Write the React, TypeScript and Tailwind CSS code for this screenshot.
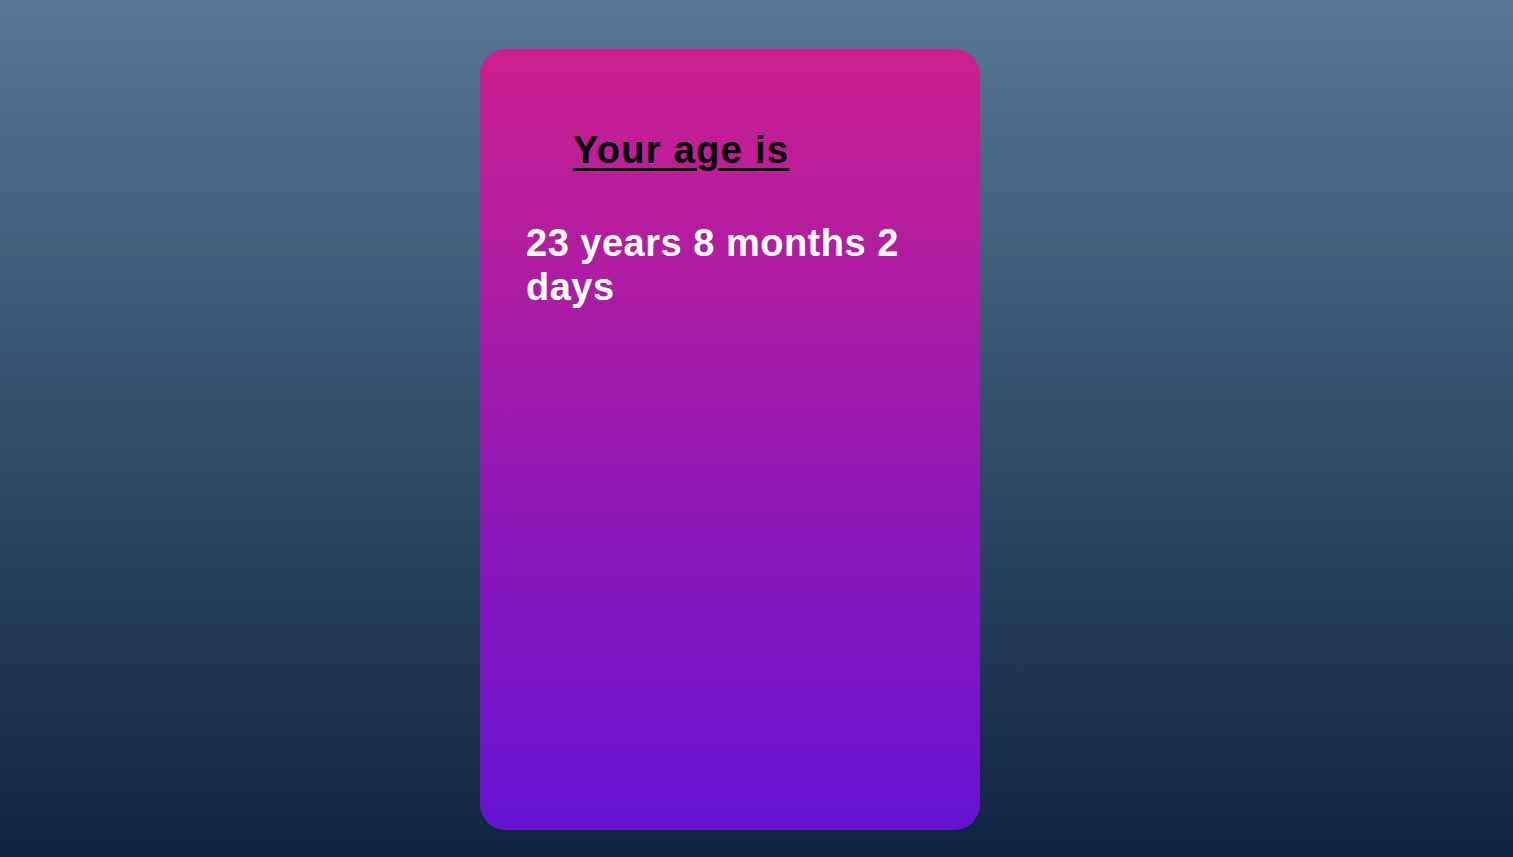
export default function App() {
  return (
    <div className="min-h-[857px] h-screen w-full bg-linear-to-b/srgb from-[#547896] to-[#0e2443] pl-[480px] pt-[49px] font-['Liberation_Sans',Arial,sans-serif]">
      <div className="w-[500px] h-[781px] rounded-[26px] bg-linear-to-b/srgb from-[#cd208e] to-[#6413d3] px-[46px] pt-[80px]">
        <h1 className="ml-[47px] text-[38px] leading-[42px] font-bold text-black tracking-[1.3px] underline underline-offset-[5px] decoration-[3px]">
          Your age is
        </h1>
        <p className="mt-[50px] text-[38px] leading-[44px] font-bold text-white tracking-[0.5px]">
          23 years 8 months 2 days
        </p>
      </div>
    </div>
  );
}
